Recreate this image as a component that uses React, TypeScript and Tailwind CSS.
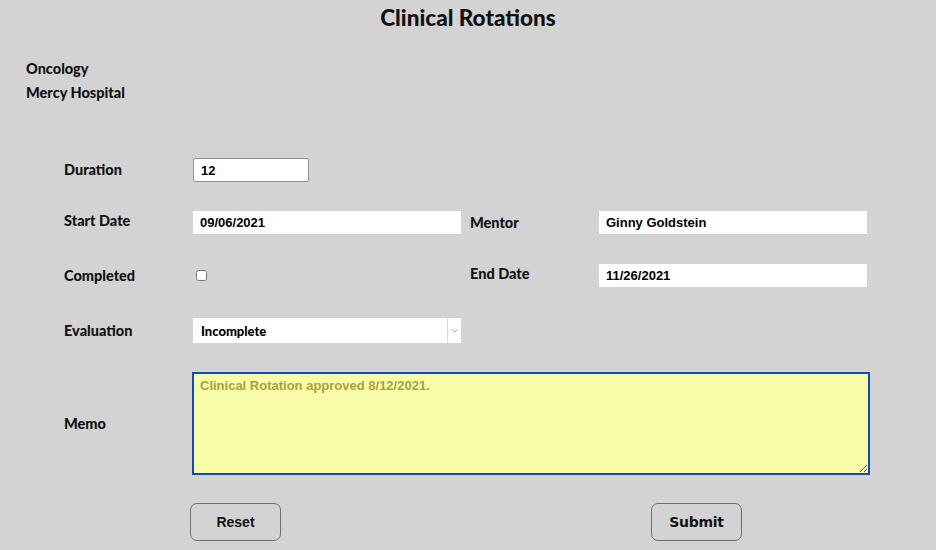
import { useState } from "react";

const labelFont = { fontFamily: "Lato, 'Open Sans', sans-serif" };

function Label({ children, className = "" }: { children: React.ReactNode; className?: string }) {
  return (
    <div className={`w-[129px] shrink-0 text-[14.5px] font-black text-[#111] ${className}`} style={labelFont}>
      {children}
    </div>
  );
}

export default function App() {
  const [duration, setDuration] = useState("12");
  const [start, setStart] = useState("09/06/2021");
  const [mentor, setMentor] = useState("Ginny Goldstein");
  const [end, setEnd] = useState("11/26/2021");
  const [done, setDone] = useState(false);
  const [evaluation, setEvaluation] = useState("Incomplete");
  const [memo, setMemo] = useState("Clinical Rotation approved 8/12/2021.");

  const inputCls =
    "h-[23px] w-[268px] bg-white px-[7px] text-[13px] font-bold text-black outline-none font-['Liberation_Sans',Arial,sans-serif]";

  return (
    <div className="h-[550px] w-[936px] overflow-hidden bg-[#d3d3d3]">
      {/* Header */}
      <h1
        className="pt-[5px] text-center text-[22.5px] font-black leading-[26px] text-[#111]"
        style={labelFont}
      >
        Clinical Rotations
      </h1>

      <div className="mt-[26px] pl-[26px] text-[14.5px] font-black leading-[24px] text-[#111]" style={labelFont}>
        <div>Oncology</div>
        <div>Mercy Hospital</div>
      </div>

      {/* Form */}
      <div className="mt-[53px] pl-[64px]">
        <div className="flex h-[24px] items-center">
          <Label>Duration</Label>
          <input
            value={duration}
            onChange={(e) => setDuration(e.target.value)}
            className="h-[24px] w-[116px] rounded-[2px] border border-[#8e8e9e] bg-white px-[7px] text-[13px] font-bold text-black outline-none font-['Liberation_Sans',Arial,sans-serif]"
          />
        </div>

        <div className="mt-[29px] flex h-[23px] items-center">
          <Label className="-mt-[3px]">Start Date</Label>
          <input value={start} onChange={(e) => setStart(e.target.value)} className={inputCls} />
          <Label className="ml-[9px]">Mentor</Label>
          <input value={mentor} onChange={(e) => setMentor(e.target.value)} className={inputCls} />
        </div>

        <div className="mt-[30px] flex h-[23px] items-center">
          <Label>Completed</Label>
          <div className="w-[268px] pl-[3px]">
            <input
              type="checkbox"
              checked={done}
              onChange={(e) => setDone(e.target.checked)}
              className="block h-[11px] w-[11px]"
            />
          </div>
          <Label className="ml-[9px] -mt-[3px]">End Date</Label>
          <input value={end} onChange={(e) => setEnd(e.target.value)} className={inputCls} />
        </div>

        <div className="mt-[31px] flex h-[25px] items-center">
          <Label>Evaluation</Label>
          <div className="flex h-[25px] w-[268px] bg-white">
            <select
              value={evaluation}
              onChange={(e) => setEvaluation(e.target.value)}
              className="flex-1 appearance-none bg-white pl-[8px] pt-[2px] text-[13px] font-black text-black outline-none"
              style={labelFont}
            >
              <option>Incomplete</option>
              <option>Pass</option>
              <option>Fail</option>
            </select>
            <div className="flex w-[14px] items-center justify-center border-l border-[#d8d8d8]">
              <svg width="8" height="5" viewBox="0 0 8 5" fill="none">
                <path d="M1 1l3 3 3-3" stroke="#b0b0b0" strokeWidth="1" />
              </svg>
            </div>
          </div>
        </div>

        <div className="mt-[29px] flex h-[103px] items-center">
          <Label className="mr-[-1px]">Memo</Label>
          <textarea
            value={memo}
            onChange={(e) => setMemo(e.target.value)}
            className="h-[103px] w-[678px] border-2 border-[#0c4fb4] bg-[#f8fca8] px-[6px] py-[2px] text-[13px] font-bold text-[#a9a23c] outline-none font-['Liberation_Sans',Arial,sans-serif]"
          />
        </div>

        <div className="mt-[28px] flex h-[38px] items-center">
          <button className="ml-[126px] h-[38px] w-[91px] rounded-[7px] border border-[#6e6e6e] text-[14px] font-bold text-[#111] font-['Liberation_Sans',Arial,sans-serif]">
            Reset
          </button>
          <button className="ml-[370px] h-[38px] w-[91px] rounded-[7px] border border-[#6e6e6e] text-[14px] font-bold text-[#111] font-['DejaVu_Sans',Verdana,sans-serif] tracking-[-0.3px]">
            Submit
          </button>
        </div>
      </div>
    </div>
  );
}
